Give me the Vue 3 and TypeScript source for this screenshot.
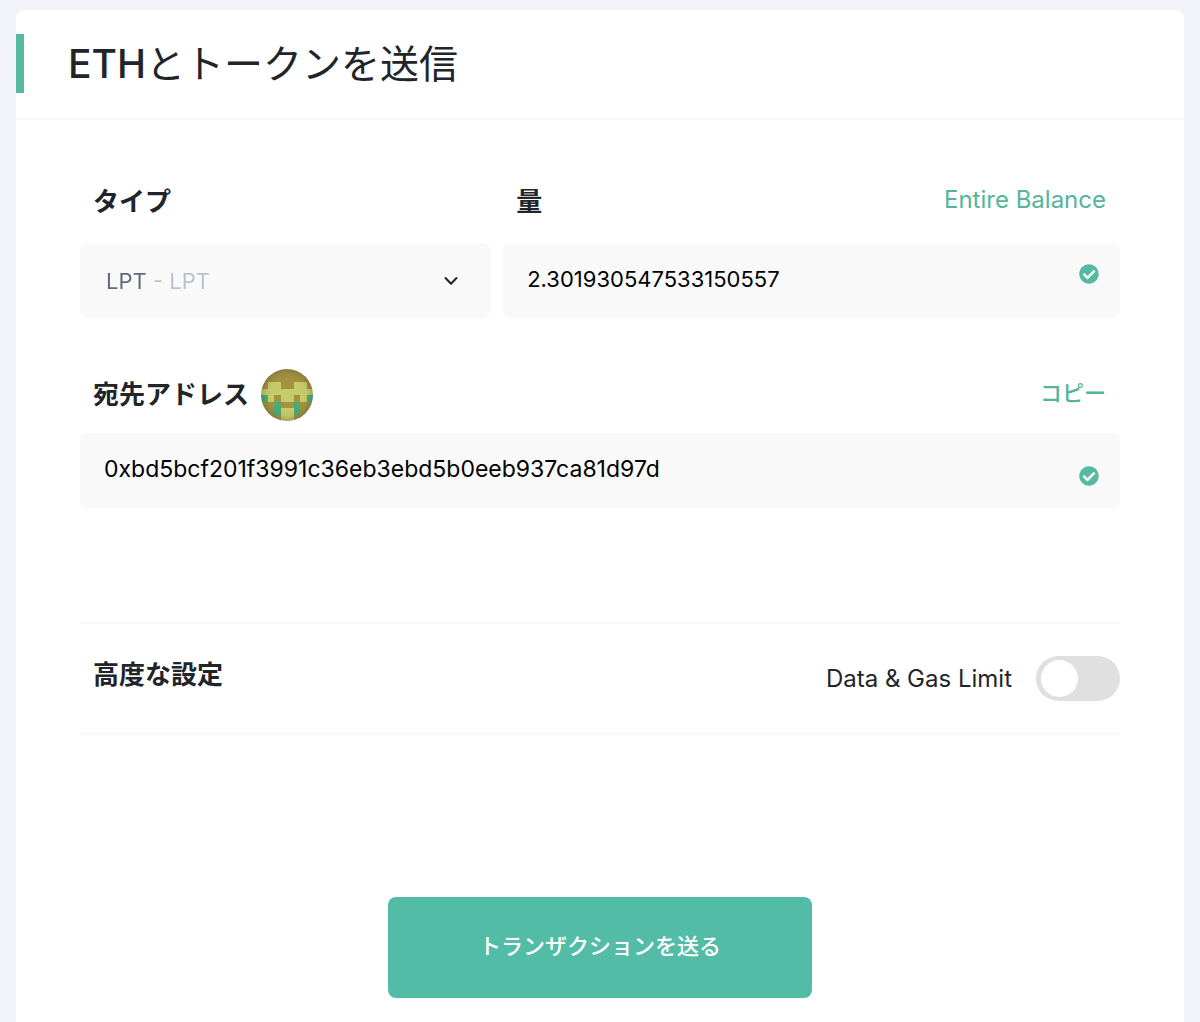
<script setup lang="ts">
import { ref } from 'vue'

interface Cell {
  x: number
  y: number
  fill: string
}

const token = ref('LPT')
const amount = ref('2.301930547533150557')
const address = ref('0xbd5bcf201f3991c36eb3ebd5b0eeb937ca81d97d')
const advanced = ref(false)

// Identicon pattern: o = base, l = light, g = green
const pattern: string[] = [
  'oooooooo',
  'oooooooo',
  'olloollo',
  'llllllll',
  'glollolg',
  'oogoogoo',
  'oogllgoo',
  'ooollooo',
]
const palette: Record<string, string> = { o: '#a3923f', l: '#c5cb6b', g: '#48ad74' }

const cells: Cell[] = pattern.flatMap((row, y) =>
  row.split('').map((key, x) => ({ x, y, fill: palette[key] })),
)

const checkPath =
  'M504 256c0 136.967-111.033 248-248 248S8 392.967 8 256 119.033 8 256 8s248 111.033 248 248zM227.314 387.314l184-184c6.248-6.248 6.248-16.379 0-22.627l-22.627-22.627c-6.248-6.249-16.379-6.249-22.628 0L216 308.118l-70.059-70.059c-6.248-6.248-16.379-6.248-22.628 0l-22.627 22.627c-6.248 6.248-6.248 16.379 0 22.627l104 104c6.249 6.249 16.379 6.249 22.628.001z'
</script>

<template>
  <main class="page">
    <form class="card" @submit.prevent>
      <header class="head">
        <h1 class="title"><span class="latin">ETH</span>とトークンを送信</h1>
      </header>

      <div class="body">
        <div class="row">
          <div class="col">
            <div class="label-row">
              <label class="label" for="token">タイプ</label>
            </div>
            <div class="field">
              <select id="token" v-model="token" class="select">
                <option value="LPT">LPT - LPT</option>
              </select>
              <svg class="chevron" viewBox="0 0 14 10" aria-hidden="true">
                <path d="M1.5 2 L7 7.7 L12.5 2" />
              </svg>
            </div>
          </div>

          <div class="col">
            <div class="label-row">
              <label class="label" for="amount">量</label>
              <a class="link link-latin" href="#">Entire Balance</a>
            </div>
            <div class="field">
              <input id="amount" v-model="amount" class="input" type="text" />
              <svg class="check check-upper" viewBox="0 0 512 512" aria-hidden="true">
                <path :d="checkPath" />
              </svg>
            </div>
          </div>
        </div>

        <div class="recipient">
          <div class="label-row label-row-tight">
            <label class="label" for="address">宛先アドレス</label>
            <span class="avatar">
              <svg viewBox="0 0 8 8" shape-rendering="crispEdges" aria-hidden="true">
                <rect
                  v-for="cell in cells"
                  :key="`${cell.x}-${cell.y}`"
                  :x="cell.x"
                  :y="cell.y"
                  width="1"
                  height="1"
                  :fill="cell.fill"
                />
              </svg>
            </span>
            <a class="link" href="#">コピー</a>
          </div>
          <div class="field">
            <input id="address" v-model="address" class="input input-address" type="text" />
            <svg class="check check-lower" viewBox="0 0 512 512" aria-hidden="true">
              <path :d="checkPath" />
            </svg>
          </div>
        </div>

        <section class="advanced">
          <h2 class="label section-label">高度な設定</h2>
          <label class="toggle">
            <span>Data &amp; Gas Limit</span>
            <input v-model="advanced" class="switch" type="checkbox" />
          </label>
        </section>

        <button class="submit" type="submit">トランザクションを送る</button>
      </div>
    </form>
  </main>
</template>

<style>
body {
  margin: 0;
  background: #f2f3f9;
}
</style>

<style scoped>
.page {
  box-sizing: border-box;
  min-height: 100vh;
  padding: 10px 16px 0;
  display: flex;
  background: #f2f3f9;
  color: #212529;
  font-family: Inter, "Noto Sans CJK JP", sans-serif;
  font-size: 22px;
}

.card {
  flex: 1;
  min-width: 0;
  background: #fff;
  border-radius: 8px 8px 0 0;
}

.head {
  padding: 24px 0;
  border-bottom: 3px solid #f9f9f9;
}

.title {
  margin: 0;
  padding-left: 44px;
  border-left: 8px solid #55b9a3;
  font-size: 39px;
  line-height: 59px;
  font-weight: 400;
}

.latin {
  font-weight: 500;
}

.body {
  display: flex;
  flex-direction: column;
  padding: 56px 64px 24px;
}

.row {
  display: grid;
  grid-template-columns: 2fr 3fr;
  gap: 12px;
}

.label-row {
  display: flex;
  align-items: center;
  height: 52px;
  margin-bottom: 15px;
  padding: 0 14px 0 13px;
}

.label-row-tight {
  margin-bottom: 12px;
}

.label {
  margin: 0;
  font-size: 26px;
  line-height: 36px;
  font-weight: 700;
}

.link {
  margin-left: auto;
  padding-bottom: 4px;
  color: #55b59c;
  font-weight: 500;
  line-height: 24px;
  text-decoration: none;
}

.link-latin {
  font-size: 24px;
  font-weight: 400;
}

.field {
  position: relative;
  height: 75px;
  border-radius: 8px;
  background: #f9f9f9;
}

.input,
.select {
  box-sizing: border-box;
  width: 100%;
  height: 100%;
  margin: 0;
  padding: 0 56px 3px 24px;
  border: 0;
  border-radius: 8px;
  outline: 0;
  background: transparent;
  color: #000;
  font: inherit;
}

.input-address {
  font-size: 23px;
}

/* The ticker symbol is darker than the token name after it */
.select {
  appearance: none;
  padding: 0 56px 0 26px;
  background: linear-gradient(90deg, #5b697b 70px, #b9c1ca 70px);
  background-clip: text;
  color: transparent;
}

.chevron {
  position: absolute;
  top: 33px;
  right: 33px;
  width: 14px;
  height: 10px;
  pointer-events: none;
  fill: none;
  stroke: #212529;
  stroke-width: 2;
  stroke-linecap: round;
  stroke-linejoin: round;
}

.check {
  position: absolute;
  right: 21px;
  width: 20px;
  height: 20px;
  fill: #55b9a3;
}

.check-upper {
  top: 21px;
}

.check-lower {
  top: 33px;
}

.recipient {
  margin-top: 51px;
}

.avatar {
  position: relative;
  width: 52px;
  height: 52px;
  margin-left: 12px;
  border-radius: 50%;
  overflow: hidden;
}

.avatar svg {
  display: block;
  width: 100%;
  height: 100%;
}

.avatar::after {
  content: "";
  position: absolute;
  inset: 0;
  border-radius: 50%;
  box-shadow: inset 0 0 8px rgba(70, 80, 60, 0.6);
}

.advanced {
  display: flex;
  align-items: center;
  justify-content: space-between;
  height: 108px;
  margin-top: 113px;
  padding-left: 13px;
  border-top: 3px solid #f9f9f9;
  border-bottom: 3px solid #f9f9f9;
}

.section-label {
  padding-bottom: 6px;
}

.toggle {
  display: flex;
  align-items: center;
  gap: 24px;
  font-size: 24px;
}

.switch {
  appearance: none;
  box-sizing: border-box;
  width: 84px;
  height: 45px;
  margin: 0;
  padding: 4px 5px;
  border-radius: 23px;
  background: #e0e0e0;
}

.switch::before {
  content: "";
  display: block;
  width: 37px;
  height: 37px;
  border-radius: 50%;
  background: #fff;
}

.switch:checked {
  padding-left: 42px;
  background: #55b9a3;
}

.submit {
  align-self: center;
  width: 424px;
  max-width: 100%;
  height: 101px;
  margin-top: 162px;
  padding: 0 0 4px;
  border: 0;
  border-radius: 8px;
  background: #52bca7;
  color: #fff;
  font: inherit;
  font-weight: 500;
  line-height: 24px;
}
</style>
